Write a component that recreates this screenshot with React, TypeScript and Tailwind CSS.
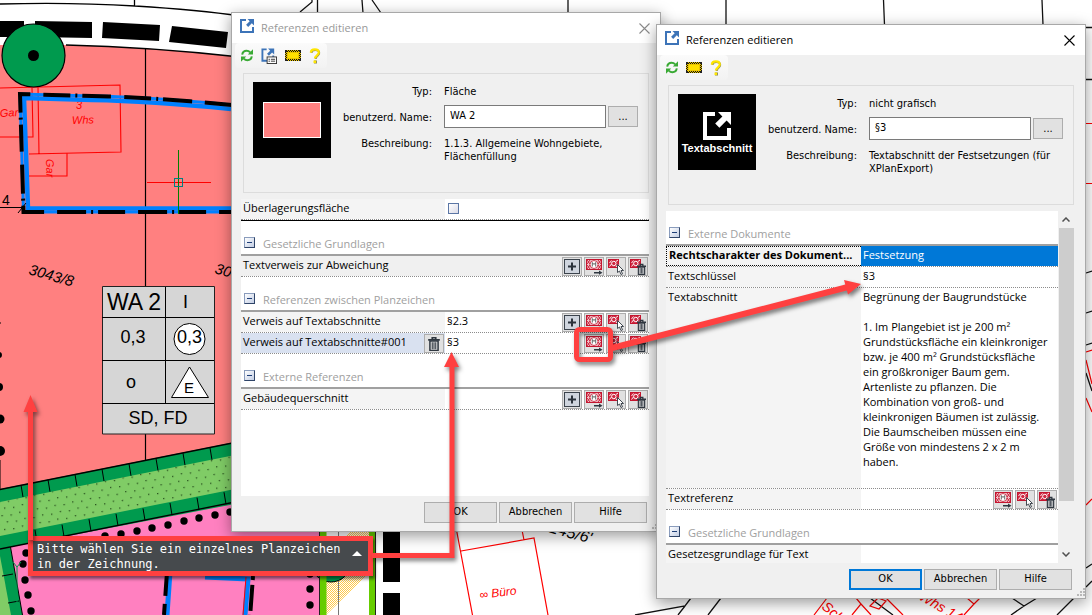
import type { ReactNode } from "react";

const RED = "#ff4040";

/* ---------- icons ---------- */

function LinkIcon({ className, color = "#3d74b8" }: { className?: string; color?: string }) {
  return (
    <svg viewBox="0 0 14 14" className={className} aria-hidden="true">
      <path d="M6 1H1v12h12V8" fill="none" stroke={color} strokeWidth="2" strokeLinejoin="miter" />
      <path d="M7.5 0H14v6.5l-2.2-2.2-3.6 3.6-2.1-2.1 3.6-3.6z" fill={color} />
    </svg>
  );
}

function RefreshIcon() {
  return (
    <svg viewBox="0 0 12 13" className="h-[13px] w-3" aria-hidden="true">
      <g fill="none" stroke="#3aaa35" strokeWidth="2">
        <path d="M1.2 5.6C1.6 3.2 3.4 1.8 5.6 1.8c1.500 0 2.6.5 3.6 1.6" />
        <path d="M10.8 7.400c-.4 2.4-2.2 3.8-4.4 3.8-1.5 0-2.6-.5-3.600-1.6" />
      </g>
      <path d="M12 .3v5.2H6.800zM0 12.700V7.500h5.200z" fill="#3aaa35" />
    </svg>
  );
}

function LinkListIcon() {
  return (
    <svg viewBox="0 0 17 17" className="h-4 w-4" aria-hidden="true">
      <path d="M6 1.5H1.5v12H7M13 8v2" fill="none" stroke="#3d74b8" strokeWidth="2" />
      <path d="M7.5 0.5H14V7l-2.2-2.2-3.4 3.4-2-2 3.4-3.4z" fill="#3d74b8" />
      <rect x="6.5" y="9.5" width="10" height="7" fill="#fff" stroke="#333" />
      <path d="M8 12h1.5m1 0H15M8 14h1.5m1 0H15" stroke="#333" />
    </svg>
  );
}

function AreaIcon() {
  return (
    <svg viewBox="0 0 16 11" className="h-[11px] w-4" shapeRendering="crispEdges" aria-hidden="true">
      <rect width="16" height="11" fill="#e9c400" />
      <rect x="0.5" y="0.5" width="15" height="10" fill="none" stroke="#111" strokeDasharray="1 1" />
      <rect x="1.5" y="1.5" width="13" height="8" fill="none" stroke="#111" strokeDasharray="1 1" />
      <path d="M0 0h2v2H0zM14 0h2v2h-2zM0 9h2v2H0zM14 9h2v2h-2z" fill="#222" />
      <rect x="3" y="3" width="10" height="5" fill="#ffe000" />
    </svg>
  );
}

function HelpIcon() {
  return (
    <svg viewBox="0 0 12 16" className="h-4 w-3" aria-hidden="true">
      <path d="M2.5 5C2.5 2.8 4 2 6.2 2s4 .9 4 3c0 2.5-3.5 3-3.5 6" fill="none" stroke="#8a8a60" strokeWidth="2" />
      <path d="M1.8 4.6C2 2.4 3.6 1.4 5.8 1.4s4 1 4 3.2c0 2.6-3.8 3-3.8 6" fill="none" stroke="#ffe600" strokeWidth="2.2" />
      <rect x="5" y="12.5" width="3" height="3" fill="#8a8a60" />
      <rect x="4.5" y="12.5" width="2.6" height="2.6" fill="#ffe600" />
    </svg>
  );
}

function TrashShape() {
  return (
    <>
      <path d="M1.5 3.5v8h7v-8z" fill="#e8e8e8" stroke="#2f3740" strokeWidth="1.3" />
      <path d="M0 2.5h10M3.5 2V.5h3V2" fill="none" stroke="#2f3740" strokeWidth="1.4" />
      <path d="M3.5 4.5v6m1.5-6v6m1.5-6v6" stroke="#2f3740" strokeWidth="0.9" />
    </>
  );
}

function PlusIcon() {
  return (
    <svg viewBox="0 0 18 17" className="h-[17px] w-[18px]" aria-hidden="true">
      <rect x="1.5" y="1.5" width="15" height="14" fill="#cfd5de" stroke="#3b434c" />
      <path d="M5 8.5h8M9 4.5v8" stroke="#2b333c" strokeWidth="2" />
    </svg>
  );
}

function PlanIcon({ kind }: { kind: "go" | "pick" | "delete" }) {
  return (
    <svg viewBox="0 0 18 17" className="h-[17px] w-[18px]" aria-hidden="true">
      {kind === "go" ? (
        <>
          <rect x="1.5" y="1.5" width="15" height="10" fill="#f3c3cb" stroke="#c4152f" />
          <path d="M2 2l3 4M5 2L2 6M16 2l-3 4M13 2l3 4M2 7l3 4M5 7l-3 4M16 7l-3 4M13 7l3 4" stroke="#c4152f" strokeWidth="0.9" />
          <circle cx="9" cy="6.5" r="4" fill="#fff" stroke="#c4152f" strokeWidth="0.8" />
          <path d="M7.3 8.5v-4L9 6.5l1.7-2v4" fill="none" stroke="#555" strokeWidth="0.9" />
          <path d="M9 14h5v-1.5l3.5 2.2-3.5 2V15.500H9z" fill="#2f3740" />
        </>
      ) : (
        <>
          <rect x="1.5" y="1.5" width="10" height="8" fill="#cf2a43" stroke="#c4152f" />
          <path d="M2.5 5l2-2.5M2.5 8.500l2-2.500M9 3.500l2-1.500M9 9l2-2.500" stroke="#fff" strokeWidth="0.9" />
          <circle cx="6.8" cy="5.5" r="2.2" fill="#cf2a43" stroke="#fff" />
        </>
      )}
      {kind === "pick" && <path d="M10.5 6.5v8l2-1.5 1.5 3.5 1.5-.7-1.5-3.3h2.5z" fill="#fff" stroke="#2f3740" strokeWidth="0.9" />}
      {kind === "delete" && (
        <g transform="translate(8 6) scale(.9)">
          <TrashShape />
        </g>
      )}
    </svg>
  );
}

function CloseIcon({ color }: { color: string }) {
  return (
    <svg viewBox="0 0 11 11" className="h-[11px] w-[11px]" aria-hidden="true">
      <path d="M.5.5l10 10M10.5.5l-10 10" stroke={color} strokeWidth="1.1" />
    </svg>
  );
}

/* ---------- small controls ---------- */

function IconButton({ label, children }: { label: string; children: ReactNode }) {
  return (
    <button
      aria-label={label}
      className="flex h-[19px] w-5 shrink-0 items-center justify-center border border-[#adadad] bg-[#e1e1e1]"
    >
      {children}
    </button>
  );
}

function PlanActions({ add = true }: { add?: boolean }) {
  return (
    <div className="ml-auto flex gap-0.5 self-start pt-px pr-px">
      {add && (
        <IconButton label="Hinzufügen">
          <PlusIcon />
        </IconButton>
      )}
      <IconButton label="Anzeigen">
        <PlanIcon kind="go" />
      </IconButton>
      <IconButton label="Auswählen">
        <PlanIcon kind="pick" />
      </IconButton>
      <IconButton label="Löschen">
        <PlanIcon kind="delete" />
      </IconButton>
    </div>
  );
}

function SectionHeader({ title }: { title: string }) {
  return (
    <div className="flex h-[35px] items-end gap-2 border-b-2 border-[#a0a0a0] bg-white pb-0.5 pl-[3px] text-[#a0a0a0]">
      <button
        aria-label={title}
        className="mb-1 flex h-[11px] w-[11px] items-center justify-center border border-[#8a9cbc] border-r-[#2f4468] border-b-[#2f4468] bg-gradient-to-br from-white to-[#c3cee4]"
      >
        <span className="h-px w-[5px] bg-[#1f3f78]" />
      </button>
      <span className="leading-4">{title}</span>
    </div>
  );
}

interface RowProps {
  label: ReactNode;
  labelWidth: string;
  labelClass?: string;
  valueClass?: string;
  className?: string;
  children?: ReactNode;
}

function Row({ label, labelWidth, labelClass = "bg-[#f4f4f4]", valueClass = "bg-white", className = "h-[21px]", children }: RowProps) {
  return (
    <div className={`flex border-b border-dotted border-[#8c8c8c] leading-[17px] ${className}`}>
      <div className={`flex shrink-0 pl-0.5 ${labelWidth} ${labelClass}`}>{label}</div>
      <div className={`flex min-w-0 grow pl-0.5 ${valueClass}`}>{children}</div>
    </div>
  );
}

function DialogButton({ children, primary }: { children: ReactNode; primary?: boolean }) {
  return (
    <button
      className={`h-[21px] w-[73px] bg-[#e1e1e1] ${primary ? "border-2 border-[#0078d7]" : "border border-[#adadad]"}`}
    >
      {children}
    </button>
  );
}

function Grip() {
  return (
    <svg viewBox="0 0 8 8" className="absolute right-0 bottom-0.5 h-2 w-2" fill="#b8b8b8" aria-hidden="true">
      <path d="M6 0h2v2H6zM3 3h2v2H3zM6 3h2v2H6zM0 6h2v2H0zM3 6h2v2H3zM6 6h2v2H6z" />
    </svg>
  );
}

interface DialogProps {
  id: string;
  place: string;
  active?: boolean;
  tools: ReactNode;
  preview: ReactNode;
  type: string;
  name: string;
  description: string;
  children: ReactNode;
}

function Dialog({ id, place, active, tools, preview, type, name, description, children }: DialogProps) {
  return (
    <section
      className={`absolute flex flex-col border border-[#a8a8a8] bg-[#f0f0f0] font-['DejaVu_Sans_Condensed','DejaVu_Sans',sans-serif] text-[11px] text-black shadow-[0_4px_14px_rgba(0,0,0,0.4)] ${place}`}
    >
      <header
        className={`flex h-[30px] shrink-0 items-center gap-[7px] bg-white pr-2.5 pl-2 font-['Open_Sans',sans-serif] ${active ? "text-black" : "text-[#999999]"}`}
      >
        <LinkIcon className="mb-1 h-[14px] w-[14px]" />
        <h2>Referenzen editieren</h2>
        <button aria-label="Schließen" className="ml-auto">
          <CloseIcon color={active ? "#000" : "#8a8a8a"} />
        </button>
      </header>

      <div className="ml-[3px] flex h-[25px] items-center gap-2 self-start rounded-sm bg-gradient-to-b from-[#fbfbfb] to-[#f2f2f2] px-1.5">{tools}</div>

      <div className="mx-[11px] mt-[5px] flex h-[120px] shrink-0 border border-[#dcdcdc] pt-2 pl-[9px]">
        <div className="flex h-[76px] w-[78px] shrink-0 flex-col items-center justify-center bg-black">{preview}</div>
        <div className="grid grow grid-cols-[101px_1fr] content-start gap-x-3 leading-[13px]">
          <span className="pt-[3px] text-right">Typ:</span>
          <span className="pt-[3px]">{type}</span>
          <label htmlFor={id} className="pt-[13px] text-right">
            benutzerd. Name:
          </label>
          <div className="flex items-center gap-0.5 pt-[7px]">
            <input id={id} defaultValue={name} className="h-[23px] w-[162px] border border-[#7a7a7a] bg-white px-[5px] pb-0.5" />
            <button className="h-[21px] w-[30px] border border-[#adadad] bg-[#e1e1e1]">...</button>
          </div>
          <span className="pt-[9px] text-right">Beschreibung:</span>
          <p className="pt-[9px] pr-3">{description}</p>
        </div>
      </div>

      {children}

      <footer className="flex justify-end gap-0.5 pt-1.5 pr-[13px] pb-2">
        <DialogButton primary={active}>OK</DialogButton>
        <DialogButton>Abbrechen</DialogButton>
        <DialogButton>Hilfe</DialogButton>
      </footer>
      <Grip />
    </section>
  );
}

/* ---------- plan drawing behind the dialogs ---------- */

const ticks = [0, 1, 2, 3, 4, 5, 6, 7];
const pinkDots = [
  [105, 536], [121, 534], [137, 531], [152, 528], [168, 525], [184, 521], [199, 518], [215, 515], [230, 512],
  [26, 553], [23, 564], [25, 580], [28, 595], [31, 611], [310, 574], [310, 589], [310, 605],
];

function PlanDrawing() {
  return (
    <svg
      viewBox="0 0 1092 615"
      className="absolute top-0 left-0 h-[615px] w-[1092px] font-['Liberation_Sans',sans-serif]"
      aria-hidden="true"
    >
      <defs>
        <pattern id="grass" width="18" height="14" patternUnits="userSpaceOnUse" patternTransform="rotate(-11)">
          <path d="M2 3h1.3v1.3H2zM11 2h1.3v1.3H11zM6 10h1.3v1.3H6zM15 9h1.3v1.3H15z" fill="#254d1c" />
        </pattern>
        <pattern id="hatch" width="2" height="2" patternUnits="userSpaceOnUse">
          <path d="M0 0h1v1H0zM1 1h1v1H1z" fill="#ffc94a" />
        </pattern>
      </defs>

      {/* Building area */}
      <path d="M0 45L66 45Q150 47 240 57V492H0z" fill="#ff8080" />
      <path d="M0 4Q70 2 135 6T240 16M66 45Q150 47 240 57M134.5 0v6" fill="none" stroke="#000" strokeWidth="1.3" />
      <path d="M0 21h24v16H0zM35 21l57 1v16l-57-1zM103 22l57 3-1 16-57-3zM172 26l56 6-2 16-57-6z" />
      <path d="M145.5 48V287M145.5 434v27" stroke="#000" strokeWidth="1.2" />

      {/* Neighbouring buildings */}
      <g fill="none" stroke="#ff0000" strokeWidth="1.1">
        <path d="M0 88l120-3 1 67-92 2M32 88l1 49H0M38 87l1 67M67 153v23H29" />
      </g>
      <g fill="#ff0000" fontSize="11" fontStyle="italic">
        <text transform="translate(0 117) rotate(-3)">Gar</text>
        <text x="76" y="109">3</text>
        <text transform="translate(72 124) rotate(-2)">Whs</text>
        <text transform="translate(46 159) rotate(88)">Gar</text>
      </g>

      {/* Building boundary */}
      <path d="M231 109Q150 101 92 100L24 98l4 110.5h204" fill="none" stroke="#0080ff" strokeWidth="4.5" />
      <path d="M232 105Q150 97 92 96L20 94l3.5 118h208" fill="none" stroke="#0080ff" strokeWidth="3" />
      <path d="M232 105Q150 97 92 96L20 94l3.5 118h208" fill="none" stroke="#000" strokeWidth="4" strokeDasharray="27 13 2 0 27 5 2 5" />
      <circle cx="33.5" cy="55.5" r="31.5" fill="#009a4e" stroke="#000" strokeWidth="1.2" />
      <circle cx="33.5" cy="55.5" r="5.5" />
      <path d="M0 207.5h22M18 213l8-10" stroke="#000" />
      <text x="2" y="205" fontSize="14">4</text>

      <path d="M147 182.5h64" stroke="#ff0000" />
      <path d="M178.5 150v64" stroke="#008000" />
      <rect x="174.5" y="178.5" width="8" height="8" fill="none" stroke="#008080" />

      <g fontSize="15" fontStyle="italic">
        <text transform="translate(28 274) rotate(16)">3043/8</text>
        <text transform="translate(214 273) rotate(16)">3043/9</text>
      </g>

      {/* Usage template */}
      <path d="M102.5 286.5h112v147.5h-112z" fill="#d6d6d6" stroke="#222" />
      <path d="M102 317.5h112M102 360.5h112M102 403.5h112M165.5 287v116" stroke="#000" />
      <circle cx="189.5" cy="339" r="15.5" fill="#fff" stroke="#000" />
      <path d="M189.5 367L171.5 397.5h37z" fill="#fff" stroke="#000" />
      <g textAnchor="middle" fontSize="18">
        <text x="134" y="310" fontSize="23">WA 2</text>
        <text x="185.5" y="308">I</text>
        <text x="133" y="343">0,3</text>
        <text x="189.5" y="343">0,3</text>
        <text x="131" y="388">o</text>
        <text x="189" y="393" fontSize="15">E</text>
        <text x="158" y="424">SD, FD</text>
      </g>
      <path d="M0 322v2M0 460v30" stroke="#000" />
      <circle cx="-1" cy="355" r="3" />
      <circle cx="-1" cy="387" r="4" />
      <circle cx="0" cy="419" r="4.5" />
      <circle cx="0" cy="451" r="5" />

      {/* Pink area with hedge strips */}
      <path d="M0 549l240-48v114H0z" fill="#ff80c0" />
      <path d="M232 531h88v84h-88z" fill="#ff80c0" />
      <path d="M0 549l10.5-2L22.5 615H0z" fill="#009a4e" />
      <path d="M0 556l11 59H0z" fill="#80cc66" />
      <path d="M10.5 547L22.5 615M2 576l11-2M8 603l11-2" stroke="#000" fill="none" />
      <path d="M0 489l240-48v62L0 549z" fill="#009a4e" />
      <path d="M0 502l240-48v34L0 536z" fill="#80cc66" />
      <path d="M0 502l240-48v34L0 536z" fill="url(#grass)" />
      <path d="M0 489.5l240-48M0 549l240-48" stroke="#000" strokeWidth="1.3" />
      {ticks.map((i) => (
        <path key={i} d={`M${21 + i * 27} ${485 - i * 5.3}l2 12M${35 + i * 27} ${530 - i * 5.4}l2 12`} stroke="#000" />
      ))}
      {pinkDots.map(([x, y]) => (
        <circle key={`${x}-${y}`} cx={x} cy={y} r="3.7" />
      ))}
      <path d="M13 562l4 5 4-5M17 567v48" fill="none" stroke="#009a4e" />
      <path d="M170 572l-3 43M205 577l43 2-3 36" fill="none" stroke="#0080ff" strokeWidth="5" />
      <path d="M167 572l-3 43" stroke="#000" strokeWidth="4" strokeDasharray="24 8" />
      <path d="M253 576l-3 42" stroke="#000" strokeWidth="4" strokeDasharray="4 5 26" />
      <path d="M246 577l-3 38" stroke="#ff0000" />

      {/* Street edge */}
      <path d="M326 531h43v42l-43 42z" fill="url(#hatch)" />
      <path d="M326 531h25l-25 26z" fill="#fff" />
      <path d="M338.5 531v84" stroke="#777" />
      <circle cx="331" cy="562" r="20" fill="#009a4e" stroke="#000" />
      <path d="M320 531h6.5v84H320zM369 531h6v84h-6z" fill="#66cc00" />
      <path d="M319.5 531v84M375.5 531v84" stroke="#222" />
      <path d="M383 531h17v51h-17zM383 593h17v22h-17z" />

      {/* Parcel lines */}
      <g fill="none" stroke="#111" strokeWidth="1.3">
        <path d="M312 0v2l-12 10M317.5 0v13M362 0l1 13M372 0l9 13M568 0v13M726 0v25M883.5 0l1 25M1042 0l1 25" />
        <path d="M1086 27.5h6M1086 79.5h6M1086 273l6-2M1086 313l6-2M1086 345l6-2M1086 373l6 18M1086 568l6-4M1086 587l6-6" />
        <path d="M635 615l50-9 6-8M685 606l-7 9M721 598l-13 17M870 598l23 17M1012 598l12 8 13-8M1024 606l-13 9M1074 598l-17 17" />
      </g>
      <g fill="none" stroke="#ff0000" strokeWidth="1.2">
        <path d="M456.5 530l16 85M461 551l73-13 14 77M522 530l2 10" />
        <path d="M1086 123.5h6M1086 183.5h6M1086 352l6-2M1086 360l6 24M1086 398l6 14M1086 505l6-6" />
        <path d="M827 598l-13 17M852 615l9-11-5-6M861 604l10 11M870 606l8-8 8 3-7 8zM886 598l17 17M967 598l7 6-10 11M974 604l6-6" />
      </g>
      <g fontStyle="italic" fontSize="14">
        <text transform="translate(540 530) rotate(15)" fontSize="16">3145/6'</text>
        <g fill="#ff0000">
          <text transform="translate(480 599) rotate(-7)" fontSize="12">∞ Büro</text>
          <text transform="translate(821 608) rotate(40)">Sch</text>
          <text transform="translate(918 599) rotate(30)">Whs 14</text>
        </g>
      </g>
    </svg>
  );
}

/* ---------- red call-outs ---------- */

function CallOuts() {
  return (
    <svg
      viewBox="0 0 1092 615"
      className="pointer-events-none absolute top-0 left-0 h-[615px] w-[1092px] drop-shadow-[2px_3px_2px_rgba(0,0,0,0.5)]"
      aria-hidden="true"
    >
      <g fill="none" stroke={RED} strokeWidth="5">
        <path d="M30.5 540V410" />
        <path d="M372 555.5h80V366" />
        <path d="M612 348l236-61" strokeWidth="6" />
        <rect x="576.5" y="329.5" width="34" height="30" rx="3" />
      </g>
      <path d="M30.5 395l7 17h-14zM451.5 352l7.5 15h-15zM861 284l-13 10.5-4-14.5z" fill={RED} />
    </svg>
  );
}

const COL_A = "w-[204px]";
const COL_B = "w-[195px]";

export default function App() {
  return (
    <main className="relative min-h-screen w-full overflow-hidden bg-white">
      <PlanDrawing />

      <Dialog
        id="name-area"
        place="left-[231px] top-3 w-[430px]"
        tools={
          <>
            <RefreshIcon />
            <LinkListIcon />
            <AreaIcon />
            <HelpIcon />
          </>
        }
        preview={<div className="h-9 w-[58px] border border-white bg-[#ff8080]" />}
        type="Fläche"
        name="WA 2"
        description="1.1.3. Allgemeine Wohngebiete, Flächenfüllung"
      >
        <div className="mt-1.5 mr-[11px] ml-[9px] h-[297px] bg-white font-['Open_Sans',sans-serif]">
          <div className="border-b border-black">
            <Row labelWidth={COL_A} label={<label htmlFor="overlay">Überlagerungsfläche</label>}>
              <input
                id="overlay"
                type="checkbox"
                className="mt-1 ml-px h-[11px] w-[11px] appearance-none border border-[#5b76a5] bg-gradient-to-br from-white to-[#dcdce8]"
              />
            </Row>
          </div>
          <SectionHeader title="Gesetzliche Grundlagen" />
          <Row labelWidth={COL_A} label="Textverweis zur Abweichung" labelClass="bg-[#f0f0f0]" valueClass="bg-[#f0f0f0]">
            <PlanActions />
          </Row>
          <SectionHeader title="Referenzen zwischen Planzeichen" />
          <Row labelWidth={COL_A} label="Verweis auf Textabschnitte">
            §2.3
            <PlanActions />
          </Row>
          <Row
            labelWidth={COL_A}
            labelClass="bg-[#d9e1f0]"
            label={
              <>
                Verweis auf Textabschnitte#001
                <span className="ml-auto pt-px pr-px">
                  <IconButton label="Verweis löschen">
                    <svg viewBox="0 0 10 12" className="h-[14px] w-3" aria-hidden="true">
                      <TrashShape />
                    </svg>
                  </IconButton>
                </span>
              </>
            }
          >
            §3
            <PlanActions add={false} />
          </Row>
          <SectionHeader title="Externe Referenzen" />
          <Row labelWidth={COL_A} label="Gebäudequerschnitt">
            <PlanActions />
          </Row>
        </div>
      </Dialog>

      <Dialog
        id="name-text"
        active
        place="left-[656px] top-6 w-[430px]"
        tools={
          <>
            <RefreshIcon />
            <AreaIcon />
            <HelpIcon />
          </>
        }
        preview={
          <>
            <LinkIcon className="mt-1 h-7 w-7" color="#fff" />
            <span className="font-['Liberation_Sans',sans-serif] text-[11px] leading-4 font-bold text-white">Textabschnitt</span>
          </>
        }
        type="nicht grafisch"
        name="§3"
        description="Textabschnitt der Festsetzungen (für XPlanExport)"
      >
        <div className="mt-1.5 mr-[11px] ml-[9px] flex h-[352px] font-['Open_Sans',sans-serif]">
          <div className="min-w-0 grow overflow-hidden bg-white">
            <SectionHeader title="Externe Dokumente" />
            <Row
              labelWidth={COL_B}
              labelClass="border border-r-0 border-dotted border-black bg-[#f4f4f4] leading-[15px] font-bold whitespace-nowrap"
              valueClass="bg-[#0078d7] text-white"
              label="Rechtscharakter des Dokument..."
            >
              Festsetzung
            </Row>
            <Row labelWidth={COL_B} label="Textschlüssel">
              §3
            </Row>
            <Row labelWidth={COL_B} label="Textabschnitt" className="h-[201px]">
              <p className="pt-px leading-[15px] whitespace-nowrap">
                Begrünung der Baugrundstücke
                <br />
                <br />
                1. Im Plangebiet ist je 200 m²
                <br />
                Grundstücksfläche ein kleinkroniger
                <br />
                bzw. je 400 m² Grundstücksfläche
                <br />
                ein großkroniger Baum gem.
                <br />
                Artenliste zu pflanzen. Die
                <br />
                Kombination von groß- und
                <br />
                kleinkronigen Bäumen ist zulässig.
                <br />
                Die Baumscheiben müssen eine
                <br />
                Größe von mindestens 2 x 2 m
                <br />
                haben.
              </p>
            </Row>
            <Row labelWidth={COL_B} label="Textreferenz">
              <PlanActions add={false} />
            </Row>
            <SectionHeader title="Gesetzliche Grundlagen" />
            <Row labelWidth={COL_B} label="Gesetzesgrundlage für Text" />
          </div>

          {/* Scrollbar */}
          <div className="flex w-4 shrink-0 flex-col items-center">
            <button aria-label="Nach oben" className="flex h-[17px] w-full items-center justify-center">
              <svg viewBox="0 0 8 5" className="h-[5px] w-2" aria-hidden="true">
                <path d="M.5 4.5L4 1l3.5 3.5" fill="none" stroke="#505050" strokeWidth="1.5" />
              </svg>
            </button>
            <div className="h-[273px] w-[15px] bg-[#cdcdcd]" />
            <button aria-label="Nach unten" className="mt-auto flex h-[17px] w-full items-center justify-center">
              <svg viewBox="0 0 8 5" className="h-[5px] w-2" aria-hidden="true">
                <path d="M.5.5L4 4 7.5.5" fill="none" stroke="#505050" strokeWidth="1.5" />
              </svg>
            </button>
          </div>
        </div>
      </Dialog>

      {/* Command line prompt */}
      <div className="absolute top-[536px] left-7 flex h-10 w-[345px] items-start border-[5px] border-[#ff4040] bg-[#464a4d] pl-1 font-['DejaVu_Sans_Mono',monospace] text-[12px] leading-[15px] text-white shadow-[2px_3px_3px_rgba(0,0,0,0.5)]">
        <p className="pt-px whitespace-nowrap">
          Bitte wählen Sie ein einzelnes Planzeichen
          <br />
          in der Zeichnung.
        </p>
        <button aria-label="Verlauf anzeigen" className="mt-2.5 ml-auto pr-1.5">
          <svg viewBox="0 0 10 5" className="h-[5px] w-2.5" aria-hidden="true">
            <path d="M5 0l5 5H0z" fill="#fff" />
          </svg>
        </button>
      </div>

      <CallOuts />
    </main>
  );
}
